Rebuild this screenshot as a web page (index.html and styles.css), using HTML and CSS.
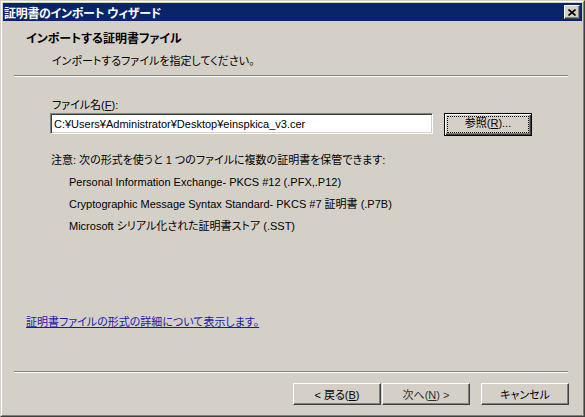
FILE: index.html
```html
<!DOCTYPE html>
<html lang="ja">
<head>
  <meta charset="UTF-8">
  <title>証明書のインポート ウィザード</title>
  <link rel="stylesheet" href="styles.css">
</head>
<body>

<div class="window">
  <div class="frame">
    <!-- タイトルバー -->
    <div class="titlebar">
      <span class="title">証明書のインポート ウィザード</span>
      <button class="close-button" aria-label="閉じる">
        <svg width="8" height="7" viewBox="0 0 8 7">
          <path d="M0.5 0.5 L7.5 6.5 M7.5 0.5 L0.5 6.5" stroke="#000" stroke-width="1.6" fill="none"/>
        </svg>
      </button>
    </div>

    <!-- ヘッダー -->
    <div class="header">
      <h1>インポートする証明書ファイル</h1>
      <p>インポートするファイルを指定してください。</p>
    </div>
    <div class="separator"></div>

    <div class="content">
      <div class="body">
        <label class="field-label" for="fileName">ファイル名(<u>F</u>):</label>
        <div class="file-row">
          <input class="text-input" id="fileName" type="text" value="C:¥Users¥Administrator¥Desktop¥einspkica_v3.cer">
          <button class="win-button default-button"><span class="focus">参照(<u>R</u>)...</span></button>
        </div>
        <p class="note">注意: 次の形式を使うと 1 つのファイルに複数の証明書を保管できます:</p>
        <ul class="formats">
          <li>Personal Information Exchange- PKCS #12 (.PFX,.P12)</li>
          <li>Cryptographic Message Syntax Standard- PKCS #7 証明書 (.P7B)</li>
          <li>Microsoft シリアル化された証明書ストア (.SST)</li>
        </ul>
      </div>
      <a class="help-link" href="#">証明書ファイルの形式の詳細について表示します。</a>
    </div>

    <div class="separator"></div>
    <!-- ボタン -->
    <div class="footer">
      <button class="win-button">&lt; 戻る(<u>B</u>)</button>
      <button class="win-button next-button">次へ(<u>N</u>) &gt;</button>
      <button class="win-button cancel-button">キャンセル</button>
    </div>
  </div>
</div>

</body>
</html>
```

FILE: styles.css
```css
* {
  box-sizing: border-box;
}
body {
  margin: 0;
  background-color: #d4d0c8;
  font-family: "Liberation Sans", "Noto Sans CJK JP", sans-serif;
  font-size: 11px;
  font-feature-settings: "palt";
  color: #000;
}
/* ウィンドウの枠 */
.window {
  width: 585px;
  height: 417px;
  border: 1px solid;
  border-color: #d4d0c8 #404040 #404040 #d4d0c8;
}
.frame {
  height: 100%;
  border: 1px solid;
  border-color: #fff #808080 #808080 #fff;
  padding: 1px;
  display: flex;
  flex-direction: column;
}
/* タイトルバー */
.titlebar {
  height: 18px;
  background-color: #0a246a;
  display: flex;
  align-items: center;
  justify-content: space-between;
  padding: 0 2px 0 1px;
}
.title {
  color: #fff;
  font-weight: bold;
  font-size: 12px;
  letter-spacing: -0.3px;
}
.close-button {
  width: 16px;
  height: 14px;
  padding: 0;
  margin: 0;
  background-color: #d4d0c8;
  border: 1px solid;
  border-color: #fff #404040 #404040 #fff;
  box-shadow: inset -1px -1px #808080;
  display: flex;
  align-items: center;
  justify-content: center;
}
.close-button svg {
  display: block;
}
/* ヘッダー */
.header {
  padding: 11px 0 7px 23px;
}
.header h1 {
  margin: 0;
  font-size: 12px;
  line-height: 14px;
  font-weight: bold;
}
.header p {
  margin: 8px 0 0 26px;
  line-height: 14px;
}
.separator {
  height: 2px;
  margin: 0 14px 0 11px;
  border-top: 1px solid #808080;
  border-bottom: 1px solid #fff;
}
/* 本文 */
.content {
  flex: 1;
  display: flex;
  flex-direction: column;
}
.body {
  padding: 21px 0 0 48px;
}
.field-label {
  display: block;
  line-height: 14px;
  margin-left: 1px;
}
.file-row {
  display: flex;
  align-items: flex-start;
  gap: 11px;
  margin-top: 1px;
}
.text-input {
  width: 383px;
  height: 21px;
  margin: 0 0 0 -1px;
  padding: 0 3px;
  font: inherit;
  font-feature-settings: "palt";
  background-color: #fff;
  border: 1px solid;
  border-color: #808080 #fff #fff #808080;
  box-shadow: inset 1px 1px #404040, inset -1px -1px #d4d0c8;
  outline: none;
}
.win-button {
  width: 88px;
  height: 22px;
  padding: 0;
  margin: 0;
  font: inherit;
  font-feature-settings: "palt";
  color: #000;
  background-color: #d4d0c8;
  border: 1px solid;
  border-color: #fff #404040 #404040 #fff;
  box-shadow: inset -1px -1px #808080;
}
/* 既定のボタン */
.default-button {
  height: 23px;
  border: 1px solid #000;
  box-shadow: inset 1px 1px #fff, inset -1px -1px #404040, inset -2px -2px #808080;
  padding: 3px;
}
.focus {
  display: block;
  height: 100%;
  line-height: 13px;
  outline: 1px dotted #000;
}
.note {
  margin: 13px 0 0;
  line-height: 22px;
}
.formats {
  list-style: none;
  margin: 0;
  padding: 0 0 0 18px;
}
.formats li {
  line-height: 22px;
}
.help-link {
  margin: auto 0 42px 23px;
  line-height: 14px;
  color: #1a1aa8;
  text-decoration: underline;
  align-self: flex-start;
}
/* 下のボタン */
.footer {
  display: flex;
  justify-content: flex-end;
  padding: 10px 13px 9px 0;
}
.next-button {
  margin-left: 1px;
  color: #303030;
}
.cancel-button {
  margin-left: 11px;
}
```
